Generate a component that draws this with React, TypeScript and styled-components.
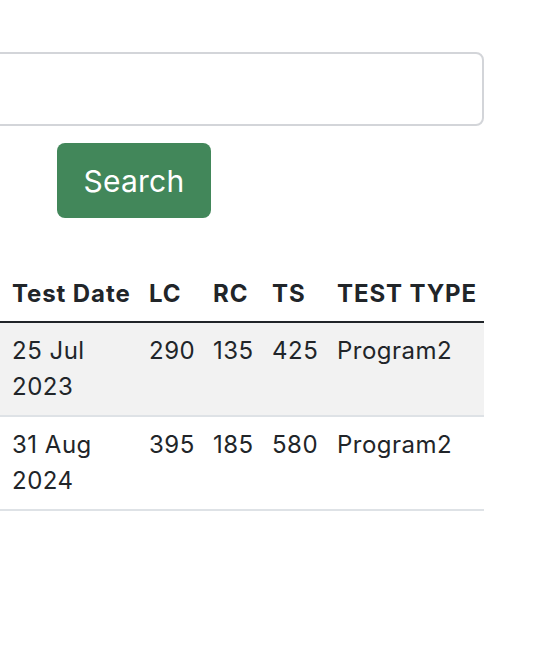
import React from "react";
import styled, { createGlobalStyle } from "styled-components";

const Global = createGlobalStyle`
  html, body { margin: 0; padding: 0; background: #ffffff; overflow: hidden; }
  body { font-family: Inter, "Noto Sans", "Liberation Sans", sans-serif; color: #212529; }
`;

const Page = styled.div`
  width: 548px;
  height: 646px;
  overflow: hidden;
`;

const Container = styled.div`
  margin-left: -24px;
  width: 508px;
  padding-top: 52px;
  display: flex;
  flex-direction: column;
`;

const SearchInput = styled.input`
  box-sizing: border-box;
  width: 100%;
  height: 74px;
  border: 2px solid #d3d5d9;
  border-radius: 8px;
  font-family: inherit;
  font-size: 24px;
  padding: 0 16px;
  outline: none;
`;

const SearchButton = styled.button`
  align-self: flex-start;
  margin: 17px 0 0 81px;
  width: 154px;
  height: 75px;
  border: none;
  border-radius: 8px;
  background: #42875a;
  color: #ffffff;
  font-family: inherit;
  font-size: 30px;
  font-weight: 400;
  letter-spacing: 0.2px;
  cursor: pointer;
`;

const Table = styled.table`
  margin-top: 48px;
  width: 508px;
  border-collapse: collapse;
  table-layout: fixed;
  font-size: 24px;
  line-height: 36px;
`;

const Col = styled.col<{ $w: number }>`
  width: ${(p) => p.$w}px;
`;

const Th = styled.th<{ $first?: boolean }>`
  text-align: left;
  font-weight: 700;
  letter-spacing: 0.9px;
  padding: 10px 8px 9px ${(p) => (p.$first ? 36 : 8)}px;
  border-bottom: 2px solid #212529;
  white-space: nowrap;
`;

const Tr = styled.tr<{ $striped?: boolean }>`
  background: ${(p) => (p.$striped ? "#f2f2f2" : "#ffffff")};
`;

const Td = styled.td<{ $first?: boolean }>`
  vertical-align: top;
  letter-spacing: 0.5px;
  padding: 10px 8px 10px ${(p) => (p.$first ? 36 : 8)}px;
  border-bottom: 2px solid #dee2e6;
`;

const columns = [
  { label: "Test Date", w: 165 },
  { label: "LC", w: 64 },
  { label: "RC", w: 59 },
  { label: "TS", w: 65 },
  { label: "TEST TYPE", w: 155 },
];

const rows = [
  ["25 Jul 2023", "290", "135", "425", "Program2"],
  ["31 Aug 2024", "395", "185", "580", "Program2"],
];

export default function App() {
  return (
    <Page>
      <Global />
      <Container>
        <SearchInput type="text" />
        <SearchButton>Search</SearchButton>
        <Table>
          <colgroup>
            {columns.map((c) => (
              <Col key={c.label} $w={c.w} />
            ))}
          </colgroup>
          <thead>
            <tr>
              {columns.map((c, i) => (
                <Th key={c.label} $first={i === 0}>
                  {c.label}
                </Th>
              ))}
            </tr>
          </thead>
          <tbody>
            {rows.map((r, ri) => (
              <Tr key={ri} $striped={ri % 2 === 0}>
                {r.map((v, i) => (
                  <Td key={i} $first={i === 0}>
                    {v}
                  </Td>
                ))}
              </Tr>
            ))}
          </tbody>
        </Table>
      </Container>
    </Page>
  );
}
